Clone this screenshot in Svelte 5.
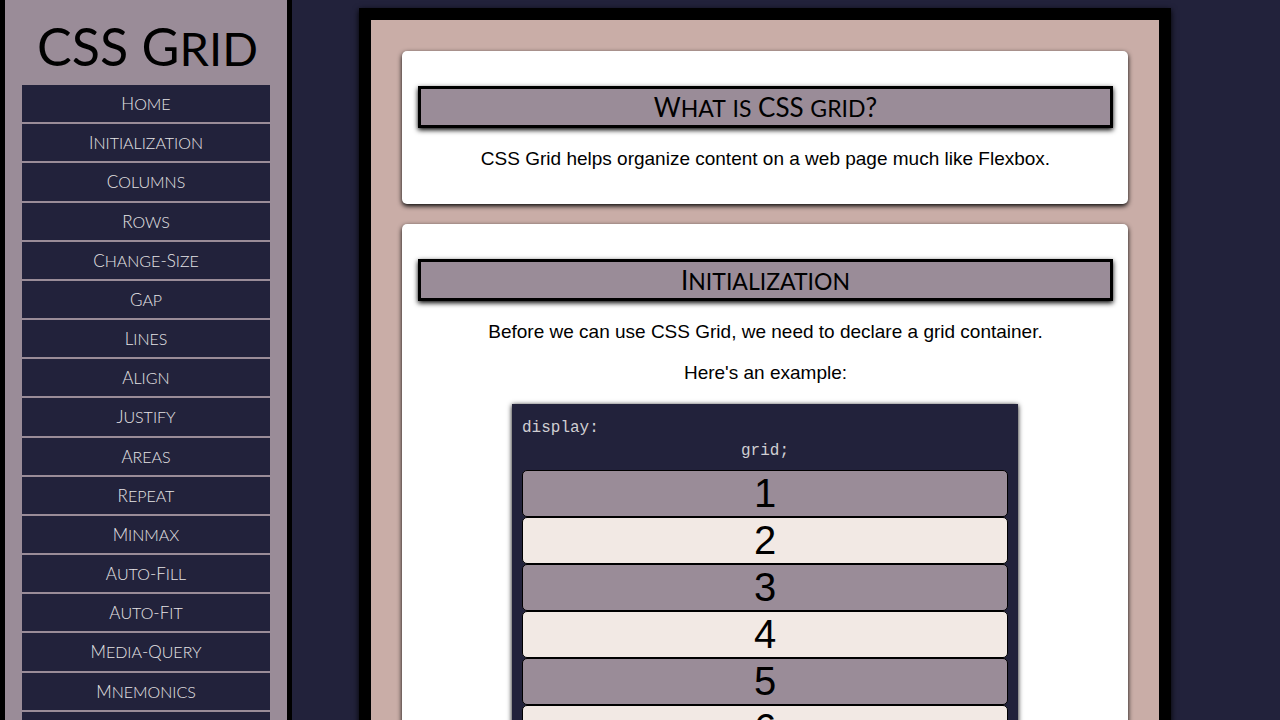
<script>
  const links = [
    'Home', 'Initialization', 'Columns', 'Rows', 'Change-Size', 'Gap', 'Lines', 'Align', 'Justify',
    'Areas', 'Repeat', 'Minmax', 'Auto-Fill', 'Auto-Fit', 'Media-Query', 'Mnemonics', 'Resources'
  ];
  const cells = [1, 2, 3, 4, 5, 6];

  // Splits text so lowercase runs can be set as slightly smaller capitals.
  const runs = (text) => text.match(/[a-z]+|[^a-z]+/g) ?? [];
</script>

{#snippet caps(text)}{#each runs(text) as run}{#if /[a-z]/.test(run)}<span class="small">{run}</span>{:else}{run}{/if}{/each}{/snippet}

<div class="page">
  <nav class="sidebar" aria-label="Sections">
    <h1>{@render caps('CSS Grid')}</h1>
    <ul>
      {#each links as link}
        <li><a href="#{link.toLowerCase()}">{@render caps(link)}</a></li>
      {/each}
    </ul>
  </nav>

  <main>
    <section id="home">
      <h2>{@render caps('What is CSS grid?')}</h2>
      <p>CSS Grid helps organize content on a web page much like Flexbox.</p>
    </section>

    <section id="initialization">
      <h2>{@render caps('Initialization')}</h2>
      <p>Before we can use CSS Grid, we need to declare a grid container.</p>
      <p>Here's an example:</p>
      <div class="example">
        <code class="property">display:</code>
        <code>grid;</code>
        <div class="cells">
          {#each cells as cell}
            <div class="cell">{cell}</div>
          {/each}
        </div>
      </div>
    </section>
  </main>
</div>

<style>
  :global(body) {
    margin: 0;
    background: #22223b;
    font-family: "Liberation Sans", Arial, sans-serif;
    color: #000;
  }

  .page {
    display: flex;
    align-items: flex-start;
  }

  .sidebar {
    box-sizing: border-box;
    flex: none;
    width: 292px;
    height: 100vh;
    position: sticky;
    top: 0;
    overflow: hidden;
    padding: 9px 17px 0;
    border: solid #000;
    border-width: 0 5px;
    background: #9a8c98;
    text-align: center;
  }

  h1,
  h2,
  a {
    font-family: Lato, sans-serif;
    font-weight: 400;
  }

  .small {
    line-height: 1;
    text-transform: uppercase;
  }

  h1 {
    margin: 0 0 2px;
    padding-left: 3px;
    font-size: 52px;
    line-height: 74px;
    white-space: nowrap;
  }

  h1 .small {
    font-size: 47px;
  }

  ul {
    display: grid;
    grid-auto-rows: 1fr;
    gap: 2px;
    min-height: 664px;
    margin: 0;
    padding: 0;
    list-style: none;
  }

  li {
    display: grid;
  }

  a {
    display: block;
    background: #22223b;
    color: #e6e4e6;
    font-size: 17px;
    font-weight: 300;
    line-height: 37px;
    text-decoration: none;
  }

  a .small {
    font-size: 16px;
  }

  main {
    flex: 1;
    display: grid;
    gap: 20px;
    margin: 8px 109px 8px 67px;
    padding: 31px;
    border: 12px solid #000;
    background: #c9ada7;
    box-shadow: 0 2px 6px #000;
  }

  section {
    padding: 35px 15px 15px 16px;
    border-radius: 5px;
    background: #fff;
    box-shadow: 0 2px 5px #000;
    text-align: center;
  }

  h2 {
    margin: 0 0 20px;
    border: 3px solid #000;
    background: #9a8c98;
    box-shadow: 0 2px 5px #000;
    font-size: 26px;
    line-height: 36px;
  }

  h2 .small {
    font-size: 23px;
  }

  p {
    margin: 19px 0;
    font-size: 19px;
    line-height: 22px;
  }

  .example {
    margin: 20px 95px 20px 94px;
    padding: 13px 10px 10px;
    background: #22223b;
    box-shadow: 0 1px 5px #000;
  }

  code {
    display: block;
    color: #d0ced2;
    font-family: "Liberation Mono", "Courier New", monospace;
    font-size: 16px;
    line-height: 23px;
  }

  .property {
    text-align: left;
  }

  .cells {
    display: grid;
    margin-top: 7px;
  }

  .cell {
    border: 1px solid #000;
    border-radius: 5px;
    background: #9a8c98;
    font-size: 40px;
    line-height: 45px;
  }

  .cell:nth-child(even) {
    background: #f2e9e4;
  }
</style>
